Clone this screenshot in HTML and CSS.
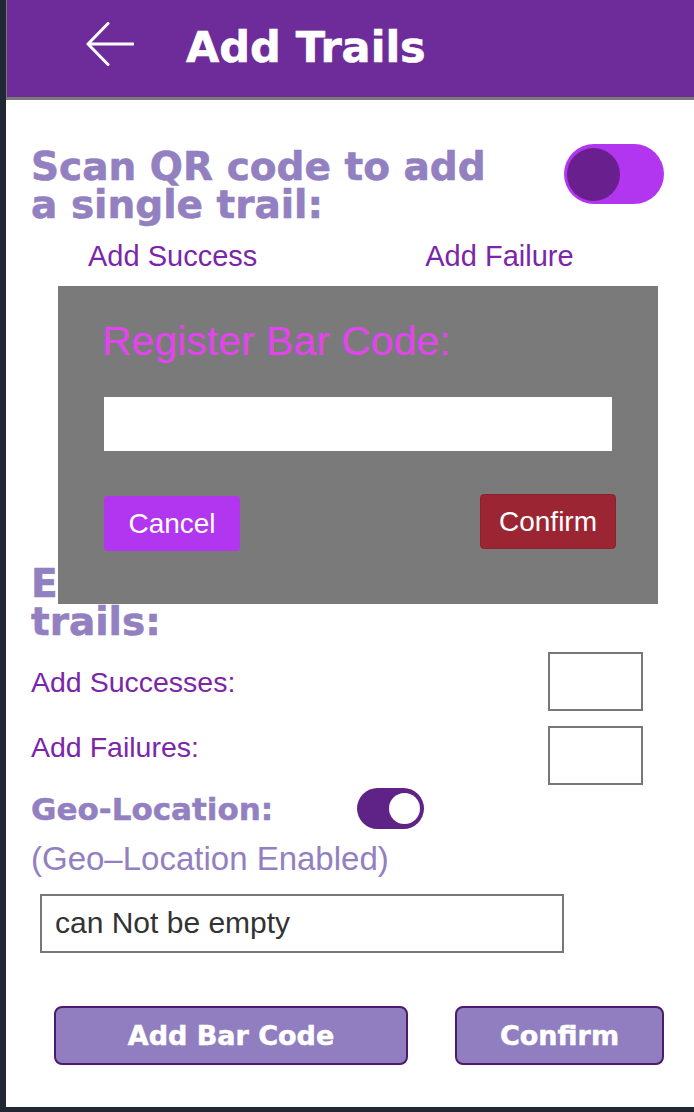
FILE: index.html
```html
<!DOCTYPE html>
<html lang="en">
<head>
<meta charset="utf-8">
<title>Add Trails</title>
<link rel="stylesheet" href="styles.css">
</head>
<body>
<div class="app">
  <header class="topbar">
    <svg class="back" viewBox="0 0 48 44" width="48" height="44" aria-hidden="true">
      <path d="M22 1.5 L2 22 L22 42.5 M2 22 H47" fill="none" stroke="#ffffff" stroke-width="3" stroke-linecap="round" stroke-linejoin="round"/>
    </svg>
    <h1 class="title">Add Trails</h1>
  </header>

  <main class="content">
    <section class="single">
      <div class="single-head">
        <h2 class="heading heading-single">Scan QR code to add a single trail:</h2>
        <span class="switch switch-big"><span class="knob"></span></span>
      </div>
      <div class="outcomes">
        <span class="outcome">Add Success</span>
        <span class="outcome">Add Failure</span>
      </div>
      <div class="scan-area"></div>
    </section>

    <section class="multi">
      <h2 class="heading">Enter totals for<br>trails:</h2>
      <div class="counts">
        <div class="count-labels">
          <span class="count-label">Add Successes:</span>
          <span class="count-label">Add Failures:</span>
        </div>
        <div class="count-boxes">
          <input class="count-box" type="text" aria-label="Add Successes">
          <input class="count-box" type="text" aria-label="Add Failures">
        </div>
      </div>
      <div class="geo-row">
        <span class="geo-label">Geo-Location:</span>
        <span class="switch switch-small"><span class="knob"></span></span>
      </div>
      <p class="geo-status">(Geo–Location Enabled)</p>
      <input class="note" type="text" placeholder="can Not be empty">
      <div class="actions">
        <button class="action action-wide" type="button">Add Bar Code</button>
        <button class="action action-narrow" type="button">Confirm</button>
      </div>
    </section>
  </main>

  <div class="modal">
    <h3 class="modal-title">Register Bar Code:</h3>
    <input class="modal-input" type="text" aria-label="Bar code">
    <div class="modal-actions">
      <button class="modal-btn modal-cancel" type="button">Cancel</button>
      <button class="modal-btn modal-confirm" type="button">Confirm</button>
    </div>
  </div>
</div>
</body>
</html>
```

FILE: styles.css
```css
* {
  box-sizing: border-box;
}

html,
body {
  margin: 0;
  padding: 0;
}

body {
  background: #212733;
  font-family: "Liberation Sans", Arial, sans-serif;
}

.app {
  position: relative;
  margin-left: 6px;
  width: 688px;
  height: 1107px;
  background: #ffffff;
  overflow: hidden;
}

/* Header */
.topbar {
  display: flex;
  align-items: flex-start;
  height: 100px;
  padding: 22px 0 0 79px;
  background: #6d2c99;
  border-left: 1px solid #7a7a7a;
  border-bottom: 3px solid #7a7a7a;
}

.back {
  display: block;
  flex: none;
}

.title {
  margin: 1px 0 0 52px;
  font: bold 43px/48px "DejaVu Sans", sans-serif;
  color: #ffffff;
  -webkit-text-stroke: 0.6px #ffffff;
  white-space: nowrap;
}

/* Content */
.content {
  padding: 44px 30px 0 25px;
}

.heading {
  margin: 0;
  font: bold 39px/38px "DejaVu Sans", sans-serif;
  color: #9280c0;
  -webkit-text-stroke: 0.6px #9280c0;
}

.single-head {
  display: flex;
  justify-content: space-between;
  align-items: flex-start;
}

.heading-single {
  margin-top: 4px;
  max-width: 480px;
}

.switch {
  display: flex;
  align-items: center;
  flex: none;
}

.switch-big {
  width: 100px;
  height: 60px;
  padding-left: 3px;
  border-radius: 30px;
  background: #b236ef;
}

.switch-big .knob {
  width: 53px;
  height: 53px;
  border-radius: 50%;
  background: #6a1f8f;
}

.switch-small {
  justify-content: flex-end;
  width: 67px;
  height: 41px;
  padding-right: 4px;
  border-radius: 21px;
  background: #5f2388;
}

.switch-small .knob {
  width: 31px;
  height: 31px;
  border-radius: 50%;
  background: #ffffff;
}

.outcomes {
  display: flex;
  gap: 168px;
  margin-top: 16px;
  padding-left: 57px;
}

.outcome {
  font-size: 29px;
  line-height: 32px;
  color: #7b26a8;
  white-space: nowrap;
}

.scan-area {
  height: 293px;
}

/* Multiple trails */
.counts {
  display: flex;
  justify-content: space-between;
  margin-top: 11px;
  padding-right: 21px;
}

.count-labels {
  display: flex;
  flex-direction: column;
  gap: 33px;
  padding-top: 14px;
}

.count-label {
  font-size: 28.5px;
  line-height: 32px;
  color: #7b26a8;
  white-space: nowrap;
}

.count-boxes {
  display: flex;
  flex-direction: column;
  gap: 15px;
}

.count-box {
  display: block;
  width: 95px;
  height: 59px;
  margin: 0;
  padding: 0;
  border: 2px solid #777777;
  background: #ffffff;
}

.geo-row {
  display: flex;
  align-items: center;
  gap: 84px;
  margin-top: 3px;
}

.geo-label {
  font: bold 31px/34px "DejaVu Sans", sans-serif;
  color: #9280c0;
  -webkit-text-stroke: 0.5px #9280c0;
  white-space: nowrap;
}

.geo-status {
  margin: 12.6px 0 0;
  font-size: 33px;
  line-height: 34px;
  color: #9280c0;
  white-space: nowrap;
}

.note {
  display: block;
  width: 524px;
  height: 59px;
  margin: 18px 0 0 9px;
  padding: 0 0 0 13px;
  border: 2px solid #777777;
  background: #ffffff;
  font: 30px "Liberation Sans", Arial, sans-serif;
  color: #333333;
}

.note::placeholder {
  color: #333333;
  opacity: 1;
}

.actions {
  display: flex;
  gap: 47px;
  margin-top: 53px;
  padding-left: 23px;
}

.action {
  height: 59px;
  margin: 0;
  padding: 0;
  border: 2px solid #4a1c6b;
  border-radius: 8px;
  background: #917ec0;
  color: #ffffff;
  font: bold 27px "DejaVu Sans", sans-serif;
  -webkit-text-stroke: 0.5px #ffffff;
}

.action-wide {
  width: 354px;
}

.action-narrow {
  width: 209px;
}

/* Modal overlay */
.modal {
  position: absolute;
  left: 52px;
  top: 286px;
  width: 600px;
  height: 318px;
  padding: 32px 46px 0;
  background: #7a7a7a;
}

.modal-title {
  margin: 0 0 0 -2px;
  font-weight: normal;
  font-size: 41px;
  line-height: 46px;
  color: #e444ef;
  white-space: nowrap;
}

.modal-input {
  display: block;
  width: 508px;
  height: 54px;
  margin: 33px 0 0;
  padding: 0;
  border: 0;
  background: #ffffff;
}

.modal-actions {
  display: flex;
  justify-content: space-between;
  align-items: flex-start;
  margin: 43px -4px 0 0;
}

.modal-btn {
  width: 136px;
  height: 55px;
  margin: 0;
  padding: 0;
  border-radius: 4px;
  color: #ffffff;
  font: 28px "Liberation Sans", Arial, sans-serif;
}

.modal-cancel {
  margin-top: 2px;
  border: 0;
  background: #b236ef;
}

.modal-confirm {
  border: 1px solid #8a2230;
  background: #9c2533;
}
```
